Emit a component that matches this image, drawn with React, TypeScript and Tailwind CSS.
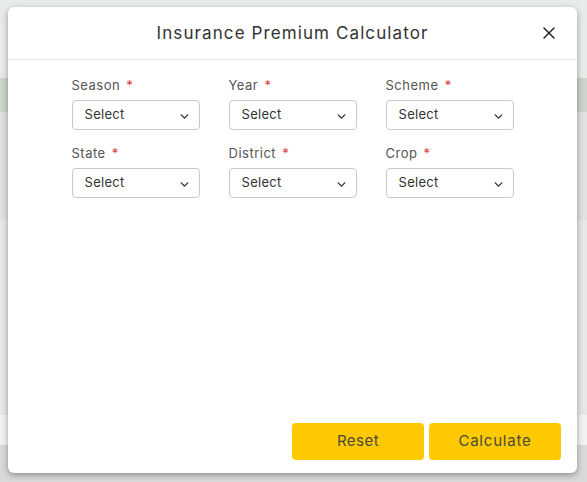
import { ChevronDown, X } from 'lucide-react'

const fields = ['Season', 'Year', 'Scheme', 'State', 'District', 'Crop']

function Field({ label }: { label: string }) {
  return (
    <div className="flex flex-col">
      <label className="text-[13px] leading-[16px] text-[#555] tracking-[0.5px] mb-[7px]">
        {label} <span className="text-[#e0383e] ml-[2px]">*</span>
      </label>
      <button className="h-[30px] w-[128px] flex items-center justify-between pl-[12px] pr-[8px] border border-[#c9c9c9] rounded-[4px] bg-white text-[13px] text-[#333]">
        <span className="tracking-[0.3px]">Select</span>
        <ChevronDown size={13} strokeWidth={2.6} className="text-[#333] mt-[2px]" />
      </button>
    </div>
  )
}

export default function App() {
  return (
    <div
      className="w-[587px] h-[482px] pt-[7px] pl-[8px] bg-[linear-gradient(to_bottom,#e8ece8_0px,#e8ece8_78px,#ccd4cc_78px,#ccd4cc_112px,#dfe2df_112px,#dfe2df_220px,#e8e7e8_220px,#e8e7e8_415px,#f2f2f2_415px,#f2f2f2_445px,#d9d9d9_445px)]"
      style={{ fontFamily: 'Inter, "Noto Sans", sans-serif' }}
    >
      <div className="w-[569px] h-[466px] bg-white rounded-[6px] shadow-[0_2px_6px_rgba(0,0,0,0.35)] flex flex-col">
        <div className="h-[53px] flex items-center justify-center relative border-b border-[#e5e5e5]">
          <h2 className="text-[17px] text-[#333] tracking-[1.1px] mt-[2px]">Insurance Premium Calculator</h2>
          <button className="absolute right-[18px] top-[16px] text-[#222]">
            <X size={20} strokeWidth={1.8} />
          </button>
        </div>
        <div className="flex-1 pt-[17px] flex justify-center">
          <div className="grid grid-cols-[128px_128px_128px] gap-x-[29px] gap-y-[15px] content-start">
            {fields.map((f) => (
              <Field key={f} label={f} />
            ))}
          </div>
        </div>
        <div className="flex justify-end gap-[5px] pr-[16px] pb-[13px]">
          <button className="w-[132px] h-[37px] rounded-[4px] bg-[#ffc900] text-[15px] text-[#4a4a3a] tracking-[0.5px]">
            Reset
          </button>
          <button className="w-[132px] h-[37px] rounded-[4px] bg-[#ffc900] text-[15px] text-[#4a4a3a] tracking-[0.8px]">
            Calculate
          </button>
        </div>
      </div>
    </div>
  )
}
